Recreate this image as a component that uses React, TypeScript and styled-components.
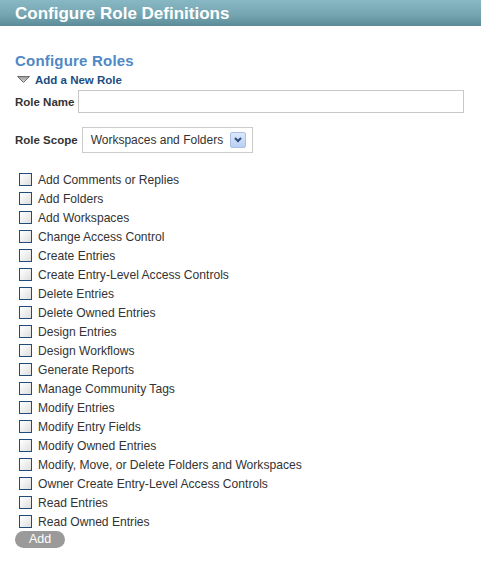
import styled, { createGlobalStyle } from "styled-components";

const GlobalStyle = createGlobalStyle`
  html, body {
    margin: 0;
    padding: 0;
    background: #ffffff;
    font-family: "Liberation Sans", Arial, sans-serif;
  }
`;

const Page = styled.div`
  width: 481px;
  min-height: 563px;
  background: #ffffff;
`;

const TitleBar = styled.header`
  height: 26px;
  line-height: 27px;
  padding-left: 15px;
  background: linear-gradient(to bottom, #88b8c4 0%, #76a6b2 55%, #5c8c98 100%);
  color: #ffffff;
  font-size: 17px;
  font-weight: bold;
`;

const Content = styled.main`
  padding: 26px 15px 0 15px;
`;

const SectionTitle = styled.h2`
  margin: 0;
  font-size: 15px;
  line-height: 18px;
  font-weight: bold;
  color: #4f88c6;
  letter-spacing: 0.2px;
`;

const Toggle = styled.div`
  display: flex;
  align-items: center;
  gap: 5px;
  height: 19px;
  padding-left: 2px;
  font-size: 11.5px;
  font-weight: bold;
  color: #1b4e80;
`;

const FieldRow = styled.div<{ $top: number }>`
  display: flex;
  align-items: center;
  gap: 4px;
  margin-top: ${({ $top }) => $top}px;
`;

const Label = styled.label`
  font-size: 11.5px;
  font-weight: bold;
  color: #333333;
`;

const TextInput = styled.input`
  box-sizing: border-box;
  width: 386px;
  height: 23px;
  border: 1px solid #c8c8c8;
  margin: 0;
  padding: 0 4px;
  outline: none;
`;

const SelectBox = styled.div`
  box-sizing: border-box;
  display: flex;
  align-items: center;
  justify-content: space-between;
  width: 171px;
  height: 26px;
  padding: 0 6px 0 8px;
  border: 1px solid #cccccc;
  font-size: 12px;
  color: #333333;
`;

const DropButton = styled.span`
  box-sizing: border-box;
  display: flex;
  align-items: center;
  justify-content: center;
  width: 16px;
  height: 16px;
  border: 1px solid #a9c1e6;
  border-radius: 2px;
  background: linear-gradient(to bottom, #dce8fb, #b9cff2);
`;

const PermissionList = styled.ul`
  list-style: none;
  margin: 17px 0 0 0;
  padding: 0;
`;

const PermissionItem = styled.li`
  display: flex;
  align-items: center;
  height: 19px;
  padding-left: 4px;
  font-size: 12.1px;
  color: #333333;
`;

const Box = styled.span`
  box-sizing: border-box;
  width: 13px;
  height: 13px;
  margin-right: 6px;
  border: 1px solid #1f4c7a;
  background: linear-gradient(135deg, #ffffff 0%, #ececec 60%, #dedede 100%);
`;

const AddButton = styled.button`
  display: block;
  width: 50px;
  height: 17px;
  margin-top: 0;
  padding: 0;
  border: none;
  border-radius: 9px;
  background: #9a9a9a;
  color: #ffffff;
  font-family: "Liberation Sans", Arial, sans-serif;
  font-size: 12.5px;
  line-height: 17px;
`;

const permissions = [
  "Add Comments or Replies",
  "Add Folders",
  "Add Workspaces",
  "Change Access Control",
  "Create Entries",
  "Create Entry-Level Access Controls",
  "Delete Entries",
  "Delete Owned Entries",
  "Design Entries",
  "Design Workflows",
  "Generate Reports",
  "Manage Community Tags",
  "Modify Entries",
  "Modify Entry Fields",
  "Modify Owned Entries",
  "Modify, Move, or Delete Folders and Workspaces",
  "Owner Create Entry-Level Access Controls",
  "Read Entries",
  "Read Owned Entries",
];

export default function App() {
  return (
    <Page>
      <GlobalStyle />
      <TitleBar>Configure Role Definitions</TitleBar>
      <Content>
        <SectionTitle>Configure Roles</SectionTitle>
        <Toggle>
          <svg width="13" height="7" viewBox="0 0 13 7">
            <defs>
              <linearGradient id="tri" x1="0" y1="0" x2="0" y2="1">
                <stop offset="0" stopColor="#9a9a9a" />
                <stop offset="1" stopColor="#d8d8d8" />
              </linearGradient>
            </defs>
            <path d="M0.5 0.5 H12.5 L6.5 6.5 Z" fill="url(#tri)" stroke="#6e6e6e" strokeWidth="1" />
          </svg>
          Add a New Role
        </Toggle>
        <FieldRow $top={1}>
          <Label>Role Name</Label>
          <TextInput type="text" />
        </FieldRow>
        <FieldRow $top={14}>
          <Label>Role Scope</Label>
          <SelectBox>
            Workspaces and Folders
            <DropButton>
              <svg width="8" height="6" viewBox="0 0 8 6">
                <path d="M1 1 L4 4 L7 1" fill="none" stroke="#2c4d80" strokeWidth="2" />
              </svg>
            </DropButton>
          </SelectBox>
        </FieldRow>
        <PermissionList>
          {permissions.map((p) => (
            <PermissionItem key={p}>
              <Box />
              {p}
            </PermissionItem>
          ))}
        </PermissionList>
        <AddButton>Add</AddButton>
      </Content>
    </Page>
  );
}
